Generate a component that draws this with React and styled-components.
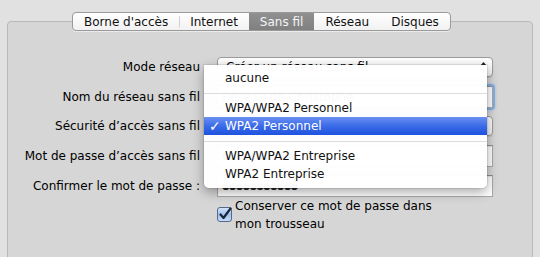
import React from "react";
import styled, { createGlobalStyle } from "styled-components";

const Global = createGlobalStyle`
  html, body { margin: 0; padding: 0; background: #e1e1e1; }
  body { font-family: "DejaVu Sans", "Liberation Sans", sans-serif; font-size: 12px; color: #000; }
`;

const Window = styled.div`
  position: relative;
  width: 540px;
  height: 257px;
  overflow: hidden;
  box-sizing: border-box;
  padding: 12px 7px 0 7px;
  background: #e1e1e1;
`;

const TabBar = styled.div`
  position: relative;
  z-index: 2;
  display: inline-flex;
  margin-left: 65px;
  height: 19px;
  box-sizing: border-box;
  border: 1px solid #9a9a9a;
  border-radius: 4px;
  background: linear-gradient(#ffffff, #f1f1f1);
  overflow: hidden;
  box-shadow: 0 1px 0 rgba(255,255,255,0.5);
`;

const Tab = styled.div`
  display: flex;
  align-items: center;
  padding: 0 11px;
  height: 100%;
  white-space: nowrap;
  color: ${p => (p.$active ? "#f5f5f5" : "#111")};
  background: ${p => (p.$active ? "linear-gradient(#909090, #808080)" : "transparent")};
  position: relative;
  & + &::before {
    content: "";
    position: absolute;
    left: 0;
    top: 3px;
    bottom: 3px;
    width: 1px;
    background: ${p => (p.$after ? "transparent" : "#d0d0d0")};
  }
`;

const Panel = styled.div`
  margin-top: -10px;
  height: 260px;
  box-sizing: border-box;
  border: 1px solid #b9b9b9;
  border-radius: 4px;
  background: #d6d6d6;
  padding-top: 34px;
`;

const Form = styled.div`
  display: grid;
  grid-template-columns: 192px 276px;
  grid-template-rows: 22px 23px 22px 23px 23px auto;
  column-gap: 17px;
  row-gap: 7px;
  align-items: center;
`;

const Label = styled.div`
  text-align: right;
  white-space: nowrap;
  color: #000;
`;

const Popup = styled.div`
  position: relative;
  height: 20px;
  box-sizing: border-box;
  border: 1px solid #9c9c9c;
  border-radius: 4px;
  background: linear-gradient(#ffffff, #f0f0f0);
  padding-left: 8px;
  display: flex;
  align-items: center;
  box-shadow: 0 1px 1px rgba(0,0,0,0.12);
`;

const Arrows = styled.svg`
  position: absolute;
  right: 5px;
  top: 4px;
`;

const Field = styled.div`
  height: 22px;
  box-sizing: border-box;
  border: 1px solid #a8a8a8;
  border-top-color: #8e8e8e;
  background: #fff;
  padding-left: 4px;
  display: flex;
  align-items: center;
  color: ${p => (p.$dots ? "#222" : "#000")};
  letter-spacing: ${p => (p.$dots ? "-1px" : "0")};
  font-size: ${p => (p.$dots ? "9px" : "12px")};
  border-radius: ${p => (p.$focus ? "2px" : "0")};
  box-shadow: ${p => (p.$focus ? "0 0 0 2px #86aee0, 0 0 3px 2px #9fc0ea" : "inset 0 1px 1px rgba(0,0,0,0.1)")};
`;

const CheckRow = styled.div`
  grid-column: 2;
  display: flex;
  align-items: flex-start;
  gap: 3px;
  margin-top: -7px;
  line-height: 18px;
`;

const Box = styled.svg`
  margin-top: 10px;
  flex: none;
`;

const Menu = styled.div`
  position: absolute;
  z-index: 5;
  left: 204px;
  top: 65px;
  width: 283px;
  padding: 4px 0 5px;
  background: rgba(255, 255, 255, 0.975);
  border-radius: 0 0 5px 5px;
  box-shadow: 0 4px 12px rgba(0,0,0,0.35), 0 0 0 1px rgba(0,0,0,0.08);
`;

const Item = styled.div`
  position: relative;
  height: 18px;
  display: flex;
  align-items: center;
  padding-left: 21px;
  white-space: nowrap;
  color: ${p => (p.$selected ? "#fff" : "#111")};
  background: ${p => (p.$selected ? "linear-gradient(#6a90f1, #3b6be8 50%, #1d53e0)" : "transparent")};
`;

const Check = styled.span`
  position: absolute;
  left: 5px;
  top: 0;
  line-height: 18px;
  font-size: 14px;
  font-weight: bold;
`;

const Sep = styled.div`
  height: 12px;
  display: flex;
  align-items: center;
  &::after {
    content: "";
    flex: 1;
    height: 1px;
    background: #dcdcdc;
  }
`;

const rows = [
  { label: "Mode réseau", kind: "popup", value: "Créer un réseau sans fil" },
  { label: "Nom du réseau sans fil", kind: "focus", value: "Réseau de Christophe" },
  { label: "Sécurité d’accès sans fil", kind: "popup", value: "WPA2 Personnel" },
  { label: "Mot de passe d’accès sans fil", kind: "dots", value: "●●●●●●●●●●●" },
  { label: "Confirmer le mot de passe :", kind: "dots", value: "●●●●●●●●●●●" },
];

const tabs = ["Borne d'accès", "Internet", "Sans fil", "Réseau", "Disques"];

const menu = [
  { t: "aucune" },
  { sep: true },
  { t: "WPA/WPA2 Personnel" },
  { t: "WPA2 Personnel", selected: true },
  { sep: true },
  { t: "WPA/WPA2 Entreprise" },
  { t: "WPA2 Entreprise" },
];

export default function App() {
  return (
    <>
      <Global />
      <Window>
        <TabBar>
          {tabs.map((t, i) => (
            <Tab key={t} $active={t === "Sans fil"} $after={tabs[i - 1] === "Sans fil" || t === "Sans fil"}>
              {t}
            </Tab>
          ))}
        </TabBar>
        <Panel>
          <Form>
            {rows.map(r => (
              <React.Fragment key={r.label}>
                <Label>{r.label}</Label>
                {r.kind === "popup" ? (
                  <Popup>
                    {r.value}
                    <Arrows width="7" height="11" viewBox="0 0 7 11">
                      <path d="M3.5 0 L7 4 L0 4 Z M3.5 11 L7 7 L0 7 Z" fill="#222" />
                    </Arrows>
                  </Popup>
                ) : (
                  <Field $focus={r.kind === "focus"} $dots={r.kind === "dots"}>
                    {r.value}
                  </Field>
                )}
              </React.Fragment>
            ))}
            <CheckRow>
              <Box width="15" height="15" viewBox="0 0 15 15">
                <defs>
                  <linearGradient id="cb" x1="0" y1="0" x2="0" y2="1">
                    <stop offset="0" stopColor="#d6e6fb" />
                    <stop offset="0.5" stopColor="#9ec2ef" />
                    <stop offset="1" stopColor="#c8ddf7" />
                  </linearGradient>
                </defs>
                <rect x="0.5" y="0.5" width="14" height="14" rx="2.5" fill="url(#cb)" stroke="#55698a" />
                <path d="M3.5 7.5 L6.5 11 L13.5 1.5" fill="none" stroke="#1b2535" strokeWidth="2.2" strokeLinecap="round" strokeLinejoin="round" />
              </Box>
              <span>
                Conserver ce mot de passe dans
                <br />
                mon trousseau
              </span>
            </CheckRow>
          </Form>
        </Panel>
        <Menu>
          {menu.map((m, i) =>
            m.sep ? (
              <Sep key={i} />
            ) : (
              <Item key={i} $selected={m.selected}>
                {m.selected && <Check>✓</Check>}
                {m.t}
              </Item>
            )
          )}
        </Menu>
      </Window>
    </>
  );
}
